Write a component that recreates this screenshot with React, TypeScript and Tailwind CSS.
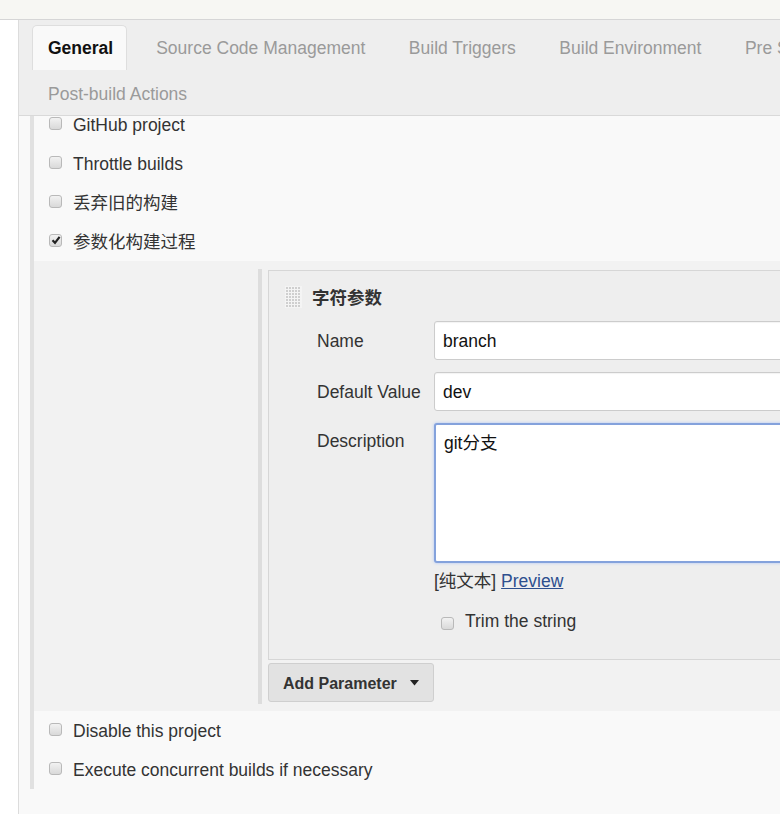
import React from 'react';

const Box = ({ checked = false }: { checked?: boolean }) => (
  <span className="flex h-[13px] w-[13px] shrink-0 items-center justify-center rounded-[3px] border border-[#b9b9b9] bg-gradient-to-b from-[#f2f2f2] to-[#d9d9d9]">
    {checked ? (
      <svg width="10" height="10" viewBox="0 0 10 10">
        <path d="M1.5 5.2 L4 7.8 L8.6 1.8" fill="none" stroke="#222" strokeWidth="2.2" />
      </svg>
    ) : null}
  </span>
);

const CheckRow = ({ label, checked = false }: { label: string; checked?: boolean }) => (
  <div className="flex h-[39px] items-center gap-[11px] pl-[15px]">
    <span className="-mt-[3px]">
      <Box checked={checked} />
    </span>
    <span className="text-[#333]">{label}</span>
  </div>
);

const DragHandle = () => (
  <svg width="17" height="22" viewBox="0 0 17 22" className="shrink-0">
    <rect width="17" height="22" fill="#f4f4f4" />
    {Array.from({ length: 7 }).map((_, r) =>
      Array.from({ length: 5 }).map((_, c) => (
        <rect key={`${r}-${c}`} x={1 + c * 3} y={1 + r * 3} width="2" height="2" fill="#cfcfcf" />
      ))
    )}
  </svg>
);

const tabs = ['Source Code Management', 'Build Triggers', 'Build Environment', 'Pre Steps', 'Build'];

export default function App() {
  return (
    <div className="flex h-[814px] w-[780px] flex-col overflow-hidden bg-white font-['Liberation_Sans','Noto_Sans_CJK_SC',sans-serif] text-[17.5px] leading-[20px]">
      <div className="h-[20px] shrink-0 border-b border-[#d6d6d6] bg-[#f7f7f3]" />
      <div className="flex flex-1">
        <div className="w-[18px] shrink-0 bg-white" />
        <div className="w-[1100px] shrink-0 border-l border-[#dcdcdc] bg-[#f9f9f9]">
          <div className="relative z-10 border-b border-[#d9d9d9] bg-[#eeeeee] px-[13px] pt-[5px]">
            <div className="flex h-[45px]">
              <div className="mr-[14px] flex items-center rounded-t-[5px] border border-b-0 border-[#dedede] bg-[#f9f9f9] pl-[15px] pr-[13px] font-bold text-[#111]">
                General
              </div>
              {tabs.map((t) => (
                <div key={t} className="mr-[13.5px] flex items-center px-[15px] text-[#9a9a9a]">
                  {t}
                </div>
              ))}
            </div>
            <div className="flex h-[45px]">
              <div className="flex items-center px-[16px] pt-[2px] text-[#9a9a9a]">Post-build Actions</div>
            </div>
          </div>

          <div className="ml-[11px] -mt-[11px] border-l-4 border-[#e1e1e1]">
            <CheckRow label="GitHub project" />
            <CheckRow label="Throttle builds" />
            <CheckRow label="丢弃旧的构建" />
            <CheckRow label="参数化构建过程" checked />

            <div className="bg-[#f2f2f2] pb-[7px] pl-[224px] pt-[8px]">
              <div className="border-l-4 border-[#dddddd] pb-[2px] pl-[6px] pt-[1px]">
                <div className="border border-[#d6d6d6] bg-[#eeeeee] pb-[28px] pl-[16px] pt-[14px]">
                  <div className="flex h-[24px] items-center gap-[10px]">
                    <DragHandle />
                    <span className="mt-[2px] font-bold text-[#333]">字符参数</span>
                  </div>

                  <div className="mt-[12px] flex flex-col gap-[12px] pl-[32px]">
                    <div className="flex items-center">
                      <div className="w-[117px] shrink-0 text-[#333]">Name</div>
                      <div className="flex h-[39px] w-[600px] items-center rounded-[3px] border border-[#cccccc] bg-white pl-[8px] text-[#111] shadow-[inset_0_1px_1px_rgba(0,0,0,0.05)]">
                        branch
                      </div>
                    </div>
                    <div className="flex items-center">
                      <div className="w-[117px] shrink-0 text-[#333]">Default Value</div>
                      <div className="flex h-[39px] w-[600px] items-center rounded-[3px] border border-[#cccccc] bg-white pl-[8px] text-[#111] shadow-[inset_0_1px_1px_rgba(0,0,0,0.05)]">
                        dev
                      </div>
                    </div>
                    <div className="flex items-start">
                      <div className="w-[117px] shrink-0 pt-[8px] text-[#333]">Description</div>
                      <div>
                        <textarea
                          readOnly
                          value="git分支"
                          className="block h-[140px] w-[600px] resize-none rounded-[3px] border-2 border-[#84a2dc] bg-white px-[8px] py-[8px] text-[#111] outline-none shadow-[0_0_3px_rgba(102,153,255,0.5)]"
                        />
                        <div className="mt-[8px] text-[#333]">
                          [纯文本] <span className="text-[#2d4f8e] underline">Preview</span>
                        </div>
                        <div className="mt-[20px] flex items-center gap-[11px] pl-[7px]">
                          <span className="mt-[4px]">
                            <Box />
                          </span>
                          <span className="text-[#333]">Trim the string</span>
                        </div>
                      </div>
                    </div>
                  </div>
                </div>

                <button className="mt-[3px] flex h-[39px] items-center gap-[13px] rounded-[3px] border border-[#cfcfcf] bg-[#e2e2e2] pl-[14px] pr-[14px] pt-[3px] text-[16px] font-bold text-[#333]">
                  Add Parameter
                  <svg width="9" height="6" viewBox="0 0 9 6" className="-mt-[2px]">
                    <path d="M0 0 H9 L4.5 5.5 Z" fill="#222" />
                  </svg>
                </button>
              </div>
            </div>

            <CheckRow label="Disable this project" />
            <CheckRow label="Execute concurrent builds if necessary" />
          </div>
        </div>
      </div>
    </div>
  );
}
